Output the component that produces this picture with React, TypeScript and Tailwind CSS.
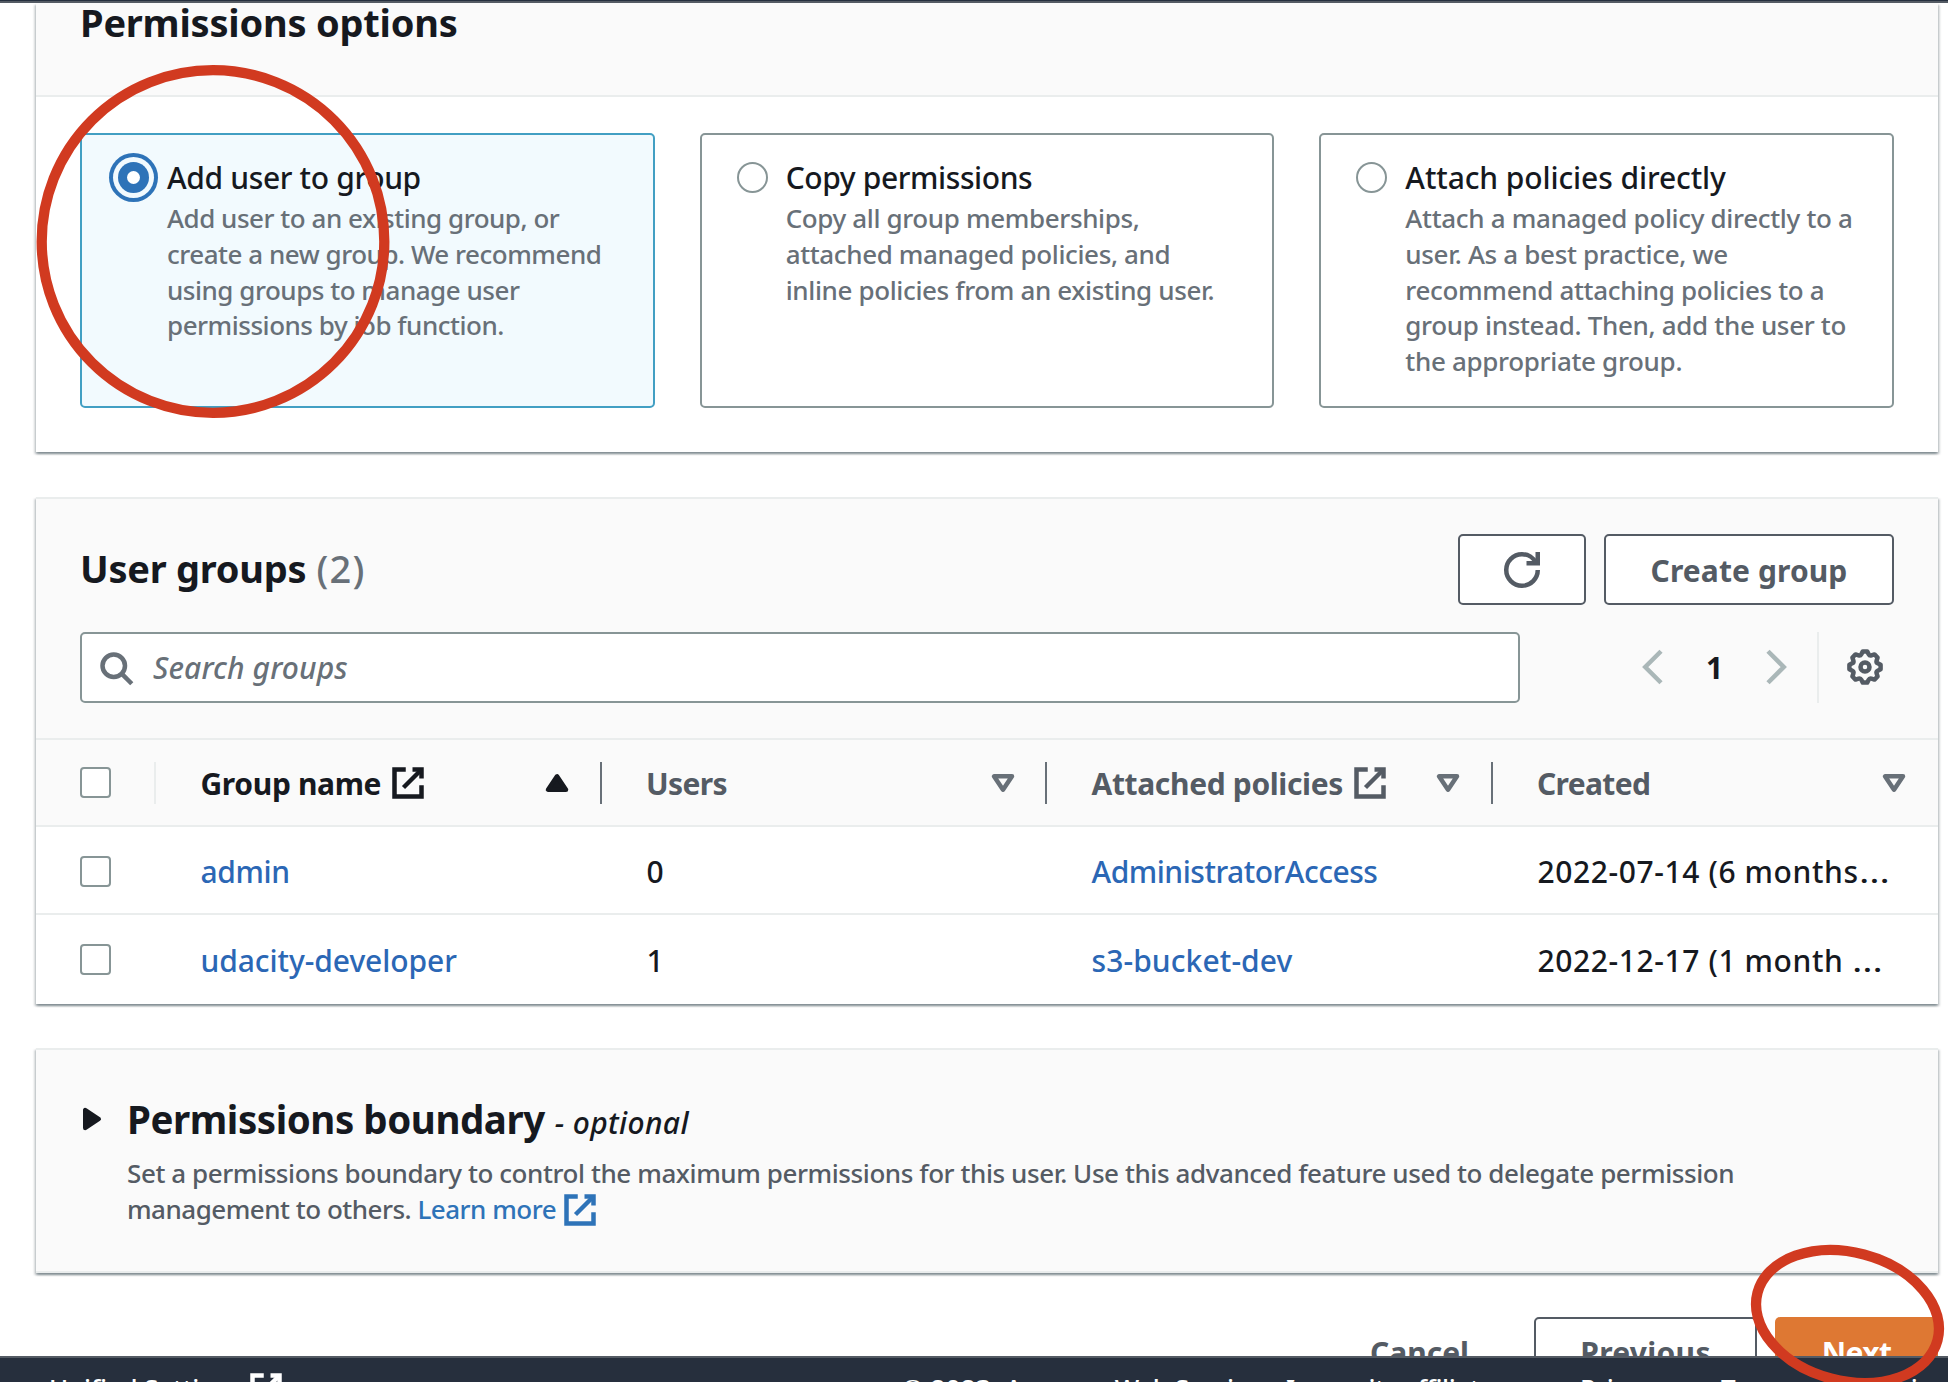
import type { ReactNode } from "react";

const panelShadow =
  "shadow-[0_2px_2px_0_rgba(0,28,36,0.3),2px_2px_2px_0_rgba(0,28,36,0.15),-2px_2px_2px_0_rgba(0,28,36,0.15)]";

function Icon({ children, className = "" }: { children: ReactNode; className?: string }) {
  return (
    <svg
      viewBox="0 0 16 16"
      className={`size-[36px] shrink-0 overflow-visible ${className}`}
      fill="none"
      stroke="currentColor"
      strokeWidth="2"
    >
      {children}
    </svg>
  );
}

function ExternalIcon({ className = "" }: { className?: string }) {
  return (
    <Icon className={className}>
      <path d="M10 2h4v4" />
      <path d="M6 10l8-8" />
      <path d="M14 9.048V14H2V2h5" />
    </Icon>
  );
}

// Gear outline: eight rounded teeth around the centre of a 16-unit box.
function gearPath() {
  const parts: string[] = [];
  for (let i = 0; i < 8; i++) {
    const base = (i * Math.PI) / 4;
    const at = (radius: number, offset: number) => {
      const a = base + (offset * Math.PI) / 180;
      return `${(8 + radius * Math.cos(a)).toFixed(2)} ${(8 + radius * Math.sin(a)).toFixed(2)}`;
    };
    parts.push(`${i === 0 ? "M" : "L"}${at(7, -8)}`, `L${at(7, 8)}`, `L${at(5.9, 16)}`, `Q${at(5.3, 22.5)} ${at(5.9, 29)}`);
  }
  return parts.join(" ") + "Z";
}

function SortIcon({ active = false }: { active?: boolean }) {
  return (
    <Icon className={active ? "text-[#16191f]" : "text-[#687078]"}>
      {active ? (
        <path d="M4 11h8L8 5l-4 6z" fill="currentColor" strokeLinejoin="round" />
      ) : (
        <path d="M4 5h8l-4 6-4-6z" strokeLinejoin="round" />
      )}
    </Icon>
  );
}

interface TileProps {
  title: string;
  titleTrack: string;
  textTrack: string;
  selected?: boolean;
  lines: string[];
}

function OptionTile({ title, titleTrack, textTrack, selected = false, lines }: TileProps) {
  return (
    <div
      className={`flex h-[275px] gap-[18px] rounded-[5px] border-2 pt-[20px] ${
        selected ? "border-[#429fc3] bg-[#f2fafe] pl-[36px]" : "border-[#879596] bg-white pl-[35px]"
      }`}
    >
      {selected ? (
        <div className="mt-[7px] flex size-[31px] shrink-0 items-center justify-center rounded-full bg-[#2e73b8] shadow-[0_0_0_5px_#f2fafe,0_0_0_9px_#2e73b8]">
          <div className="size-[13px] rounded-full bg-white" />
        </div>
      ) : (
        <div className="mt-[7px] size-[31px] shrink-0 rounded-full border-2 border-[#879596] bg-white" />
      )}
      <div className="whitespace-nowrap pt-px font-medium">
        <div className={`text-[30px] leading-[44px] text-[#16191f] ${titleTrack}`}>{title}</div>
        <div className={`mt-px text-[26px] leading-[35.75px] text-[#687078] ${textTrack}`}>
          {lines.map((line) => (
            <div key={line}>{line}</div>
          ))}
        </div>
      </div>
    </div>
  );
}

function Checkbox() {
  return <div className="size-[31px] rounded-[4px] border-2 border-[#879596] bg-white" />;
}

function HeadCell({ label, active = false, external = false, last = false }: { label: string; active?: boolean; external?: boolean; last?: boolean }) {
  return (
    <div className={`flex h-full items-center pl-[44.5px] ${active ? "text-[#16191f]" : "text-[#545b64]"}`}>
      <span className={`pt-[2px] ${external ? "tracking-[-0.35px]" : "tracking-[-0.65px]"}`}>{label}</span>
      {external && <ExternalIcon className="ml-[8.5px]" />}
      <span className="grow" />
      <SortIcon active={active} />
      <span className={`ml-[24.5px] h-[42px] w-[2px] ${last ? "" : "bg-[#687078]"}`} />
    </div>
  );
}

const rows = [
  { name: "admin", users: "0", policy: "AdministratorAccess", created: "2022-07-14 (6 months", nameTrack: "tracking-[-0.4px]", policyTrack: "tracking-[-0.48px]", height: "h-[88px] border-b-2 border-[#eaeded] pt-[2px]", textPad: "pt-px" },
  { name: "udacity-developer", users: "1", policy: "s3-bucket-dev", created: "2022-12-17 (1 month ", nameTrack: "tracking-[-0.07px]", policyTrack: "tracking-[0.1px]", height: "h-[89px]", textPad: "pt-[2px]" },
];

const columns = "grid grid-cols-[120px_repeat(4,minmax(0,1fr))] items-center";

export default function App() {
  return (
    <div className="relative h-[1382px] w-[1948px] overflow-hidden bg-white font-['Noto_Sans',sans-serif] text-[#16191f]">
      <div className="h-[3px] border-b-2 border-[#545b64] bg-[#252f3e]" />
      <main className="flex h-[1353px] flex-col overflow-hidden pl-[36px] pr-[10px]">
        <section className={`h-[449px] shrink-0 bg-white ${panelShadow}`}>
          <div className="h-[94px] border-b-2 border-[#eaeded] bg-[#fafafa] pl-[44px]">
            <h2 className="text-[38px] font-bold leading-[38px] tracking-[-0.22px]">Permissions options</h2>
          </div>
          <div className="grid grid-cols-3 gap-[45px] px-[44px] pt-[36px]">
            <OptionTile
              selected
              title="Add user to group"
              titleTrack="tracking-[-0.35px]"
              textTrack="tracking-[-0.48px]"
              lines={["Add user to an existing group, or", "create a new group. We recommend", "using groups to manage user", "permissions by job function."]}
            />
            <OptionTile
              title="Copy permissions"
              titleTrack="tracking-[-0.4px]"
              textTrack="tracking-[-0.37px]"
              lines={["Copy all group memberships,", "attached managed policies, and", "inline policies from an existing user."]}
            />
            <OptionTile
              title="Attach policies directly"
              titleTrack="tracking-[-0.1px]"
              textTrack="tracking-[-0.33px]"
              lines={["Attach a managed policy directly to a", "user. As a best practice, we", "recommend attaching policies to a", "group instead. Then, add the user to", "the appropriate group."]}
            />
          </div>
        </section>

        <section className={`mt-[45px] h-[507px] shrink-0 border-t-2 border-[#eaeded] bg-white ${panelShadow}`}>
          <div className="h-[241px] border-b-2 border-[#eaeded] bg-[#fafafa] px-[44px] pt-[35px]">
            <div className="flex h-[71px] items-center">
              <h2 className="grow pb-[4px] text-[38px] leading-[44px]">
                <span className="font-bold tracking-[-0.25px]">User groups</span>
                <span className="ml-[10px] font-medium tracking-[1.2px] text-[#687078]">(2)</span>
              </h2>
              <button className="flex h-[71px] w-[128px] items-center justify-center rounded-[5px] border-2 border-[#545b64] bg-white text-[#545b64]">
                <Icon>
                  <path d="M10 5h5V0" />
                  <path d="M15 8a6.957 6.957 0 01-7 7 6.957 6.957 0 01-7-7 6.957 6.957 0 017-7 6.87 6.87 0 016.3 4" />
                </Icon>
              </button>
              <button className="ml-[18px] flex h-[71px] w-[290px] items-center justify-center rounded-[5px] border-2 border-[#545b64] bg-white pt-[2px] text-[30px] font-bold tracking-[0.1px] text-[#545b64]">
                Create group
              </button>
            </div>
            <div className="mt-[27px] flex h-[71px] items-center">
              <div className="flex h-[71px] w-[1440px] shrink-0 items-center rounded-[5px] border-2 border-[#879596] bg-white pl-[16px] text-[#687078]">
                <Icon>
                  <circle cx="7" cy="7" r="5" />
                  <path d="M15 15l-4.5-4.5" />
                </Icon>
                <span className="ml-[19px] text-[30px] font-medium italic tracking-[0.1px]">Search groups</span>
              </div>
              <Icon className="mb-[2px] ml-[114px] text-[#aab7b8]">
                <path d="M12 1L5 8l7 7" />
              </Icon>
              <span className="w-[89px] shrink-0 text-center text-[30px] font-bold">1</span>
              <Icon className="mb-[2px] text-[#aab7b8]">
                <path d="M4 1l7 7-7 7" />
              </Icon>
              <span className="ml-[22px] h-[71px] w-[2px] shrink-0 bg-[#eaeded]" />
              <Icon className="mb-[2px] ml-[28px] text-[#545b64]">
                <path d={gearPath()} strokeLinejoin="round" />
                <circle cx="8" cy="8" r="2" />
              </Icon>
            </div>
          </div>
          <div className={`${columns} h-[87px] border-b-2 border-[#eaeded] bg-[#fafafa] text-[30px] font-bold`}>
            <div className="flex h-full items-center justify-between pl-[44px]">
              <Checkbox />
              <span className="h-[42px] w-[2px] bg-[#eaeded]" />
            </div>
            <HeadCell label="Group name" active external />
            <HeadCell label="Users" />
            <HeadCell label="Attached policies" external />
            <HeadCell label="Created" last />
          </div>
          {rows.map((row) => (
            <div key={row.name} className={`${columns} ${row.height} whitespace-nowrap text-[30px] font-medium`}>
              <div className="pl-[44px]">
                <Checkbox />
              </div>
              <div className={`pl-[44.5px] text-[#2b67b5] ${row.textPad} ${row.nameTrack}`}>{row.name}</div>
              <div className={`pl-[45px] ${row.textPad}`}>{row.users}</div>
              <div className={`pl-[44.5px] text-[#2b67b5] ${row.textPad} ${row.policyTrack}`}>{row.policy}</div>
              <div className={`whitespace-pre pl-[45px] tracking-[0.6px] ${row.textPad}`}>
                {row.created}
                <span className="inline-block origin-left scale-x-[1.3] font-normal">…</span>
              </div>
            </div>
          ))}
        </section>

        <section className={`mt-[44px] flex h-[225px] shrink-0 border-y-2 border-[#eaeded] bg-[#fafafa] pl-[38px] pt-[45px] ${panelShadow}`}>
          <Icon className="mt-[6px]">
            <path d="M5 4v8l6-4-6-4z" fill="currentColor" strokeLinejoin="round" />
          </Icon>
          <div className="ml-[17px] whitespace-nowrap">
            <h2 className="flex items-baseline leading-[48px]">
              <span className="text-[38.5px] font-bold tracking-[-0.45px]">Permissions boundary</span>
              <span className="ml-[10px] text-[30px] font-medium italic tracking-[0.35px]">- optional</span>
            </h2>
            <p className="mt-[9px] text-[26px] font-medium leading-[35.75px] tracking-[-0.42px] text-[#545b64]">
              Set a permissions boundary to control the maximum permissions for this user. Use this advanced feature used to delegate permission
              <br />
              <span className="tracking-[-0.5px]">
                management to others. <span className="text-[#2e73b8]">Learn more</span>
              </span>
              <ExternalIcon className="ml-[6px] inline-block align-top text-[#2e73b8]" />
            </p>
          </div>
        </section>

        <div className="mt-[44px] flex shrink-0 justify-end text-[30px] font-bold text-[#545b64]">
          <button className="h-[71px] w-[96px]">Cancel</button>
          <button className="ml-[68px] h-[71px] w-[223px] rounded-[5px] border-2 border-[#545b64] bg-white tracking-[0.3px]">Previous</button>
          <button className="ml-[18px] h-[71px] w-[163px] rounded-[5px] bg-[#de7833] tracking-[-0.6px] text-white">Next</button>
        </div>
      </main>

      <footer className="flex h-[26px] items-start overflow-hidden whitespace-nowrap border-t-2 border-[#545b64] bg-[#262f3d] pl-[49px] text-[26px] font-medium leading-[36px] text-white">
        <span className="mt-[12px] w-[199px] shrink-0 tracking-[-0.2px]">Unified Settings</span>
        <ExternalIcon className="mt-[13px]" />
        <span className="ml-[618px] mt-[12px] w-[678px] shrink-0 tracking-[-0.4px]">
          <span className="tracking-[0.2px]">© 2023, Amazon </span>Web Services, Inc. or its affiliates.
        </span>
        <span className="mt-[12px] w-[141px] shrink-0">Privacy</span>
        <span className="mt-[12px] w-[127px] shrink-0">Terms</span>
        <span className="mt-[12px] shrink-0">Cookie preferences</span>
      </footer>

      {/* Hand-drawn highlight rings over the page */}
      <svg className="pointer-events-none absolute inset-0 size-full" fill="none" stroke="#d13a20" strokeWidth="10.3">
        <circle cx="213" cy="241.5" r="171.3" />
        <ellipse cx="1847.5" cy="1316.5" rx="93.1" ry="64.2" transform="rotate(14.9 1847.5 1316.5)" />
      </svg>
    </div>
  );
}
